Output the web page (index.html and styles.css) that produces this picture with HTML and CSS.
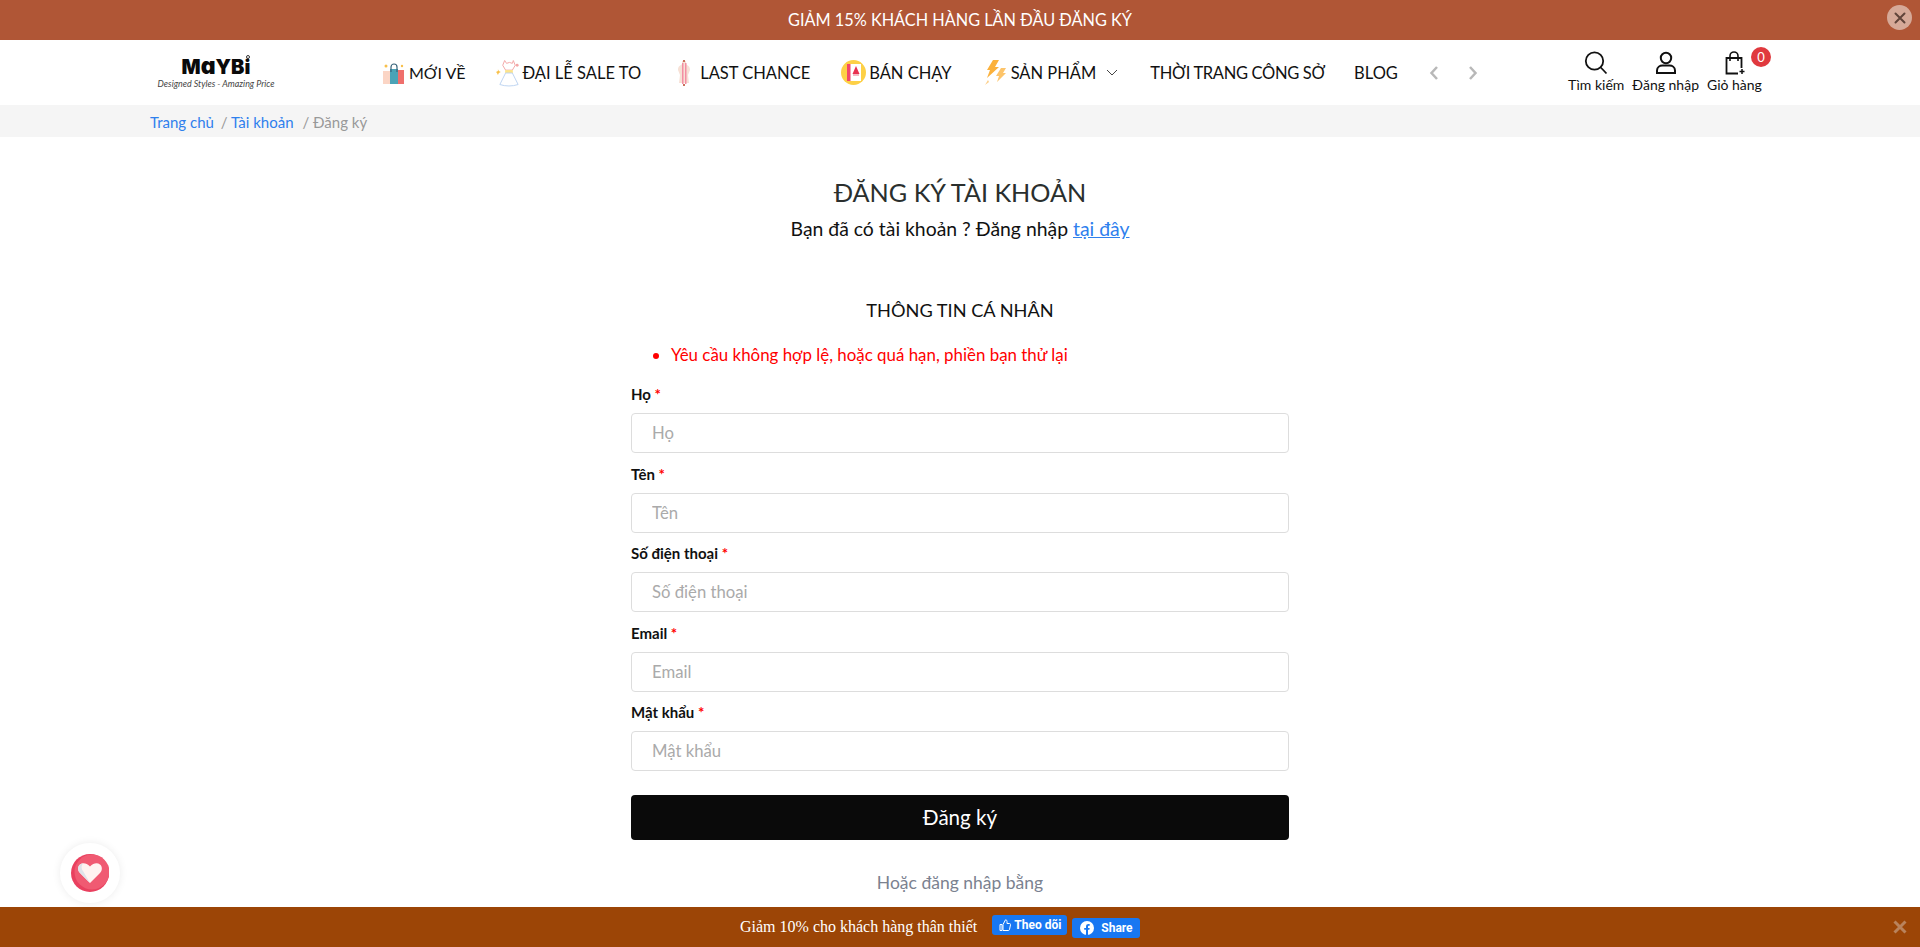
FILE: index.html
```html
<!DOCTYPE html>
<html lang="vi">
<head>
  <meta charset="UTF-8">
  <title>Đăng ký tài khoản</title>
  <link rel="stylesheet" href="styles.css">
</head>
<body>
  <div class="promo-top">
    GIẢM 15% KHÁCH HÀNG LẦN ĐẦU ĐĂNG KÝ
    <button class="promo-close" type="button" aria-label="Đóng">
      <svg width="12" height="12" viewBox="0 0 12 12"><path d="M1.5 1.5l9 9M10.5 1.5l-9 9" stroke="#60443a" stroke-width="2" stroke-linecap="round"/></svg>
    </button>
  </div>

  <header class="site-header">
    <a class="logo" href="#">
      <span class="logo-name">M<span class="logo-a">ɑ</span>YBi<span class="logo-dot"></span></span>
      <span class="logo-tag">Designed Styles - Amazing Price</span>
    </a>

    <nav class="main-nav">
      <a class="nav-item nav-item-short" href="#">
        <svg class="nav-icon" width="22" height="24" viewBox="0 0 22 24">
          <rect x="0" y="10" width="12" height="13" fill="#fbd5c5"/>
          <rect x="13" y="9" width="8" height="14" fill="#ef6f6c"/>
          <rect x="7" y="8" width="8" height="15" fill="#4ba3b7"/>
          <path d="M8 11V6a3 3 0 0 1 6 0v5" fill="none" stroke="#37637a" stroke-width="1.200"/>
          <circle cx="3" cy="5" r="1.500" fill="#f8c04a"/>
          <circle cx="19" cy="5" r="1.200" fill="#f8c04a"/>
        </svg>
        MỚI VỀ
      </a>
      <a class="nav-item" href="#">
        <svg class="nav-icon" width="25" height="30" viewBox="0 0 26 30">
          <path d="M9 2l2 3 3-1 3 1 1-3 2 5-3 5H10L7 7z" fill="#fff" stroke="#f3a6a6" stroke-width="1"/>
          <rect x="9.500" y="12" width="8" height="3" fill="#fde58a"/>
          <path d="M10 15L4 27c6 2 13 2 19 0l-6-12z" fill="#fff" stroke="#bcd3f0" stroke-width="1"/>
          <path d="M2 11l1 2 2 1-2 1-1 2-1-2-1-1 2-1z" fill="#f8c04a"/>
          <circle cx="22" cy="7" r="1.500" fill="#f3a6a6"/>
        </svg>
        ĐẠI LỄ SALE TO
      </a>
      <a class="nav-item" href="#">
        <svg class="nav-icon" width="18" height="26" viewBox="0 0 18 26">
          <path d="M7 1h4v3c2 2 4 2 4 6l-2 5 1 8H4l1-8-2-5c0-4 2-4 4-6z" fill="#f7e1d6"/>
          <rect x="7" y="3" width="1.500" height="21" fill="#f48fa3"/>
          <rect x="10" y="3" width="1.500" height="21" fill="#f48fa3"/>
          <rect x="8" y="0" width="2" height="2" fill="#c9705a"/>
          <rect x="8" y="24" width="2" height="2" fill="#c9705a"/>
        </svg>
        LAST CHANCE
      </a>
      <a class="nav-item" href="#">
        <svg class="nav-icon" width="25" height="25" viewBox="0 0 25 25">
          <circle cx="12.500" cy="12.500" r="12.500" fill="#fdd046"/>
          <rect x="6" y="4" width="14" height="17" fill="#fff"/>
          <rect x="6" y="4" width="3.500" height="17" fill="#f2476a"/>
          <path d="M15 6l3.500 8h-7z" fill="#e8304f"/>
          <rect x="12" y="14" width="6" height="2" fill="#f5b8c4"/>
        </svg>
        BÁN CHẠY
      </a>
      <a class="nav-item" href="#">
        <svg class="nav-icon" width="23" height="26" viewBox="0 0 23 26">
          <path d="M9 0h6l-4 7h4L3 18l3-8H3z" fill="#fbb13c"/>
          <path d="M17 8h5l-3 5h3l-9 9 2-6h-3z" fill="#fdc46a"/>
          <path d="M4 20l-3 5 4-3z" fill="#fdd08a"/>
        </svg>
        SẢN PHẨM
        <svg class="nav-chevron" width="12" height="7" viewBox="0 0 12 7"><path d="M1 1l5 5 5-5" fill="none" stroke="#444" stroke-width="1"/></svg>
      </a>
      <a class="nav-item nav-item-tight" href="#">THỜI TRANG CÔNG SỞ</a>
      <a class="nav-item" href="#">BLOG</a>
      <div class="nav-arrows">
        <svg width="10" height="16" viewBox="0 0 10 16"><path d="M8 2L2.500 8 8 14" fill="none" stroke="#b8b8b8" stroke-width="2.500"/></svg>
        <svg width="10" height="16" viewBox="0 0 10 16"><path d="M2 2l5.500 6L2 14" fill="none" stroke="#b8b8b8" stroke-width="2.500"/></svg>
      </div>
    </nav>

    <div class="header-actions">
      <a class="action" href="#">
        <svg width="24" height="24" viewBox="0 0 24 24"><circle cx="10.500" cy="10" r="8.700" fill="none" stroke="#111" stroke-width="1.800"/><path d="M16.800 16.500l5.700 6" stroke="#111" stroke-width="1.800"/></svg>
        <span>Tìm kiếm</span>
      </a>
      <a class="action" href="#">
        <svg width="24" height="24" viewBox="0 0 24 24"><circle cx="12" cy="7" r="5.200" fill="none" stroke="#111" stroke-width="2"/><path d="M3 22v-2.500C3 16 6 14.500 8.500 14.500h7c2.500 0 5.500 1.500 5.500 5V22z" fill="none" stroke="#111" stroke-width="2"/></svg>
        <span>Đăng nhập</span>
      </a>
      <a class="action" href="#">
        <svg width="24" height="24" viewBox="0 0 24 24"><path d="M16 22.500H4.500V7h15v10" fill="none" stroke="#111" stroke-width="1.800"/><path d="M8 10V5a4 4 0 0 1 8 0v5" fill="none" stroke="#111" stroke-width="1.600"/><path d="M20 18v5M17.500 20.500h5" stroke="#111" stroke-width="1.500"/></svg>
        <span>Giỏ hàng</span>
        <b class="cart-count">0</b>
      </a>
    </div>
  </header>

  <div class="breadcrumb">
    <a href="#">Trang chủ</a>
    <span class="crumb-sep">/</span> <a href="#">Tài khoản</a>
    <span class="crumb-sep crumb-last">/ Đăng ký</span>
  </div>

  <main class="register">
    <h1>ĐĂNG KÝ TÀI KHOẢN</h1>
    <p class="login-hint">Bạn đã có tài khoản ? Đăng nhập <a href="#">tại đây</a></p>

    <h2>THÔNG TIN CÁ NHÂN</h2>
    <ul class="form-errors">
      <li>Yêu cầu không hợp lệ, hoặc quá hạn, phiền bạn thử lại</li>
    </ul>

    <form class="register-form">
      <div class="field"><label>Họ <i>*</i></label><input type="text" placeholder="Họ"></div>
      <div class="field"><label>Tên <i>*</i></label><input type="text" placeholder="Tên"></div>
      <div class="field"><label>Số điện thoại <i>*</i></label><input type="text" placeholder="Số điện thoại"></div>
      <div class="field"><label>Email <i>*</i></label><input type="text" placeholder="Email"></div>
      <div class="field"><label>Mật khẩu <i>*</i></label><input type="password" placeholder="Mật khẩu"></div>
      <button class="submit-btn" type="submit">Đăng ký</button>
    </form>

    <p class="alt-login">Hoặc đăng nhập bằng</p>
  </main>

  <a class="wishlist" href="#" aria-label="Yêu thích">
    <svg width="38" height="38" viewBox="0 0 38 38">
      <circle cx="19" cy="19" r="19" fill="#e9405f"/>
      <circle cx="21" cy="18" r="17.500" fill="#f05a72"/>
      <path d="M19 29L9 19c-2.500-2.500-2.500-6.500 0-8.500 2.800-2 6.500-1.500 10 2 3.500-3.500 7.200-4 10-2 2.500 2 2.500 6 0 8.500z" fill="#fff3f1"/>
      <path d="M19 29L9 19c-2.500-2.500-2.500-6.500 0-8.500 1-.7 2.200-1.100 3.400-1.200-2 1.500-2.500 5-.4 7.700z" fill="#dfe3ea"/>
    </svg>
  </a>

  <div class="promo-bottom">
    <span class="promo-text">Giảm 10% cho khách hàng thân thiết</span>
    <a class="fb-btn fb-follow" href="#">
      <svg width="12" height="12" viewBox="0 0 12 12"><path d="M1 5.500h2v6H1zM4 5.500L6.500.800c1 0 1.500.7 1.500 1.700V4.500h2.500c.8 0 1.200.6 1 1.300l-1 4.700c-.1.600-.6 1-1.200 1H4z" fill="none" stroke="#fff" stroke-width="1"/></svg>
      Theo dõi
    </a>
    <a class="fb-btn fb-share" href="#">
      <svg width="14" height="14" viewBox="0 0 14 14"><circle cx="7" cy="7" r="7" fill="#fff"/><path d="M6 14V8.800H4.200V7H6V5.500C6 3.800 7 3 8.500 3c.6 0 1.200.1 1.200.1v1.600H9c-.8 0-1 .5-1 1V7h1.700l-.3 1.800H8V14z" fill="#1877f2"/></svg>
      Share
    </a>
    <button class="bottom-close" type="button" aria-label="Đóng">
      <svg width="14" height="14" viewBox="0 0 14 14"><path d="M1.500 1.500l11 11M12.500 1.500l-11 11" stroke="#b9835c" stroke-width="3"/></svg>
    </button>
  </div>
</body>
</html>
```

FILE: styles.css
```css
* { box-sizing: border-box; }
html, body { height: 947px; overflow: hidden; }
body { margin: 0; font-family: Lato, "Noto Sans", sans-serif; color: #111; background: #fff; }
a { color: inherit; text-decoration: none; }

.promo-top { position: relative; height: 40px; background: #b05636; color: #fff; font-size: 16.3px; line-height: 40px; text-align: center; }
.promo-close { position: absolute; top: 5px; right: 8px; width: 25px; height: 25px; padding: 0; border: 0; border-radius: 50%; background: #d6a998; display: flex; align-items: center; justify-content: center; }

.site-header { height: 65px; display: flex; align-items: center; padding-left: 156px; background: #fff; }
.logo { width: 120px; display: flex; flex-direction: column; align-items: center; }
.logo-name { position: relative; font-family: Inter, sans-serif; font-weight: 900; font-size: 20px; line-height: 22px; color: #0a0a0a; }
.logo-a { font-size: 23px; line-height: 20px; }
.logo-dot { position: absolute; top: -1px; right: 0; width: 4px; height: 4px; border: 1px solid #333; border-radius: 50%; }
.logo-tag { font-size: 8.9px; font-style: italic; line-height: 12px; color: #444; white-space: nowrap; }

.main-nav { display: flex; align-items: center; gap: 30px; margin-left: 107px; }
.nav-item { display: flex; align-items: center; gap: 4px; font-size: 16.5px; white-space: nowrap; color: #111; }
.nav-item-short { font-size: 16px; }
.nav-item:nth-child(2) { gap: 2px; }
.nav-item:nth-child(3) { margin-left: 4px; gap: 7px; }
.nav-item:nth-child(4) { margin-left: 1px; gap: 3px; }
.nav-item:nth-child(5) { margin-left: 2px; }
.nav-item:nth-child(6) { margin-left: 2px; }
.nav-item:nth-child(7) { margin-left: -1px; }
.nav-item-tight { letter-spacing: -.33px; }
.nav-chevron { margin-left: 6px; }
.nav-arrows { display: flex; gap: 29px; margin-left: 1px; }

.header-actions { display: flex; gap: 8px; margin-left: 90px; }
.action { position: relative; display: flex; flex-direction: column; align-items: center; gap: 1px; font-size: 14px; line-height: 18px; white-space: nowrap; }
.cart-count { position: absolute; top: -4px; right: -9px; width: 20px; height: 20px; border-radius: 50%; background: #e0393e; color: #fff; font-size: 13px; font-weight: 400; line-height: 20px; text-align: center; }

.breadcrumb { height: 32px; padding-left: 150px; background: #f5f5f5; font-size: 15px; line-height: 34px; color: #2f80ed; white-space: nowrap; }
.crumb-sep { margin-left: 3px; color: #999; }
.crumb-last { margin-left: 5px; color: #999; }

.register { width: 658px; margin: 0 auto; text-align: center; }
h1 { margin: 0; padding-top: 38px; font-size: 25.2px; font-weight: 400; line-height: 34px; color: #2a2f2e; }
.login-hint { margin: 8px 0 0; font-size: 19.4px; line-height: 24px; color: #111; }
.login-hint a { color: #2f80ed; text-decoration: underline; }
h2 { margin: 57px 0 0; font-size: 18.2px; font-weight: 400; line-height: 24px; color: #111; }

.form-errors { margin: 21px 0 0; padding: 0 0 0 40px; text-align: left; color: #f00; font-size: 16.9px; line-height: 24px; }

.register-form { margin-top: 18px; text-align: left; }
.field { height: 79.6px; }
.field label { display: block; margin-bottom: 9px; font-size: 15px; font-weight: 700; line-height: 19px; }
.field label i { color: #f00; font-style: normal; }
.field input { display: block; width: 100%; height: 40px; padding: 0 20px; border: 1px solid #ddd; border-radius: 4px; font-family: inherit; font-size: 16.7px; background: #fff; }
.field input::placeholder { color: #aaa; opacity: 1; }
.submit-btn { display: block; width: 100%; height: 45px; margin-top: 11.600px; padding-bottom: 2px; border: 0; border-radius: 4px; background: #0a0a0a; color: #fff; font-family: inherit; font-size: 20.6px; }

.alt-login { margin: 31px 0 0; font-size: 17.5px; line-height: 24px; color: #7b8290; }

.wishlist { position: fixed; left: 60px; top: 843px; width: 60px; height: 60px; display: flex; align-items: center; justify-content: center; border-radius: 50%; background: #fff; box-shadow: 0 0 8px rgba(0, 0, 0, .08); }

.promo-bottom { position: fixed; left: 0; right: 0; bottom: 0; height: 40px; padding-left: 740px; display: flex; align-items: center; background: #9c4506; }
.promo-text { font-family: "Liberation Serif", serif; font-size: 16px; color: #fff; white-space: nowrap; }
.fb-btn { display: flex; align-items: center; height: 20px; border-radius: 3px; background: #1877f2; color: #fff; font-family: Roboto, sans-serif; font-size: 12px; font-weight: 700; white-space: nowrap; }
.fb-follow { width: 75px; margin: -5px 0 0 15px; padding-left: 7px; gap: 3px; }
.fb-share { width: 68px; margin: 1px 0 0 5px; padding-left: 8px; gap: 7px; }
.bottom-close { position: absolute; top: 13px; right: 13px; padding: 0; border: 0; background: none; display: flex; }
```
